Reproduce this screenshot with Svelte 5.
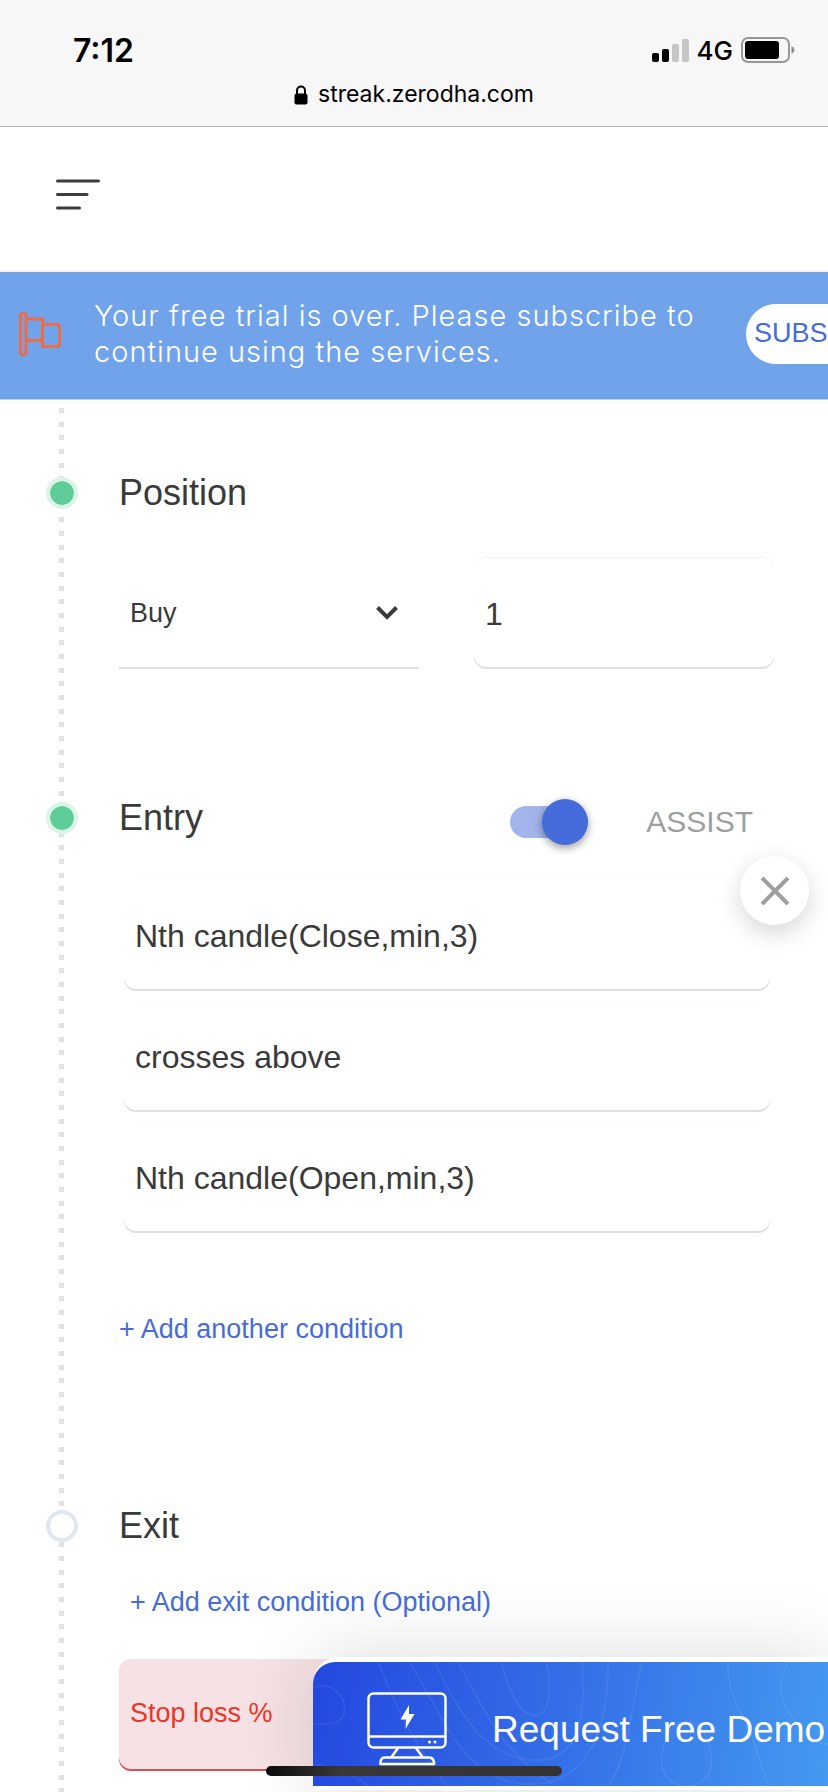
<script lang="ts">
	let side = $state('Buy');
	let quantity = $state('1');
	let assist = $state(true);
	let stopLoss = $state('');

	const bars = [
		{ x: 0, height: 9, on: true },
		{ x: 10, height: 13, on: true },
		{ x: 20, height: 18, on: false },
		{ x: 30, height: 23, on: false }
	];

	let conditions = $state([
		{ label: 'First indicator', value: 'Nth candle(Close,min,3)' },
		{ label: 'Comparator', value: 'crosses above' },
		{ label: 'Second indicator', value: 'Nth candle(Open,min,3)' }
	]);
</script>

<div class="page">
	<div class="browser">
		<div class="status">
			<span class="time">7:12</span>
			<div class="status-icons">
				<svg width="37" height="23" viewBox="0 0 37 23" aria-hidden="true">
					{#each bars as bar}
						<rect x={bar.x} y={23 - bar.height} width="7" height={bar.height} rx="2" fill={bar.on ? '#000' : '#c6c6c6'} />
					{/each}
				</svg>
				<span class="network">4G</span>
				<svg width="54" height="26" viewBox="0 0 54 26" aria-hidden="true">
					<rect x="1" y="1" width="47" height="24" rx="6" fill="none" stroke="#979797" stroke-width="2" />
					<rect x="4" y="4" width="34" height="18" rx="3" />
					<path d="M50.500 9 Q53.500 10.500 53.500 13 Q53.500 15.500 50.500 17 Z" fill="#8c8c8c" />
				</svg>
			</div>
		</div>
		<div class="address">
			<svg width="14" height="20" viewBox="0 0 14 20" aria-hidden="true">
				<path d="M3 10 V5.500 a4 4 0 0 1 8 0 V10" fill="none" stroke="#000" stroke-width="2" />
				<rect x="0.500" y="8.500" width="13" height="11" rx="2" />
			</svg>
			<span>streak.zerodha.com</span>
		</div>
	</div>

	<header class="header">
		<button class="menu" aria-label="Menu">
			<svg width="44" height="32" viewBox="0 0 44 32" fill="none" stroke="#3c3c3e" stroke-width="3" stroke-linecap="round">
				<path d="M1.500 2 H42.500 M1.500 15.500 H31 M1.500 29 H23.500" />
			</svg>
		</button>
	</header>

	<div class="banner">
		<svg width="44" height="44" viewBox="0 0 44 44" fill="none" stroke="#ea6c4b" stroke-width="3" stroke-linejoin="round" aria-hidden="true">
			<rect x="1.500" y="1.500" width="5.500" height="41" rx="2" />
			<path d="M7 7 H23.500 V28.500 H7" />
			<path d="M23.500 12.500 H38 Q40.500 12.500 40.500 15 V32 Q40.500 34.500 38 34.500 H23.500 V28" />
		</svg>
		<p>Your free trial is over. Please subscribe to continue using the services.</p>
		<button class="subscribe">SUBSCRIBE</button>
	</div>

	<main class="steps">
		<section class="step done">
			<div class="step-head">
				<h2>Position</h2>
			</div>
			<div class="fields">
				<div class="select">
					<select aria-label="Position type" bind:value={side}>
						<option>Buy</option>
						<option>Sell</option>
					</select>
					<svg width="24" height="16" viewBox="0 0 24 16" fill="none" stroke="#3a3a3a" stroke-width="4" aria-hidden="true">
						<path d="M2.500 2.500 L12 12 L21.500 2.500" />
					</svg>
				</div>
				<input class="field" aria-label="Quantity" bind:value={quantity} />
			</div>
		</section>

		<section class="step done">
			<div class="step-head">
				<h2>Entry</h2>
				<label class="assist">
					<input type="checkbox" role="switch" bind:checked={assist} />
					<span>ASSIST</span>
				</label>
			</div>
			<div class="conditions">
				{#each conditions as condition}
					<input class="field" aria-label={condition.label} bind:value={condition.value} />
				{/each}
				<button class="remove" aria-label="Remove condition">
					<svg width="30" height="30" viewBox="0 0 30 30" stroke="#9d9fa2" stroke-width="4">
						<path d="M2 2 L28 28 M28 2 L2 28" />
					</svg>
				</button>
			</div>
			<button class="add">+ Add another condition</button>
		</section>

		<section class="step">
			<div class="step-head">
				<h2>Exit</h2>
			</div>
			<button class="add optional">+ Add exit condition (Optional)</button>
			<div class="fields">
				<input class="field stop-loss" aria-label="Stop loss %" placeholder="Stop loss %" bind:value={stopLoss} />
			</div>
		</section>
	</main>

	<div class="demo">
		<button>
			<svg class="contours" viewBox="38 66 1530 374" preserveAspectRatio="xMinYMin slice" fill="none" stroke="#fff" stroke-opacity="0.06" stroke-width="6" aria-hidden="true">
				<path d="M38 142 C90 125 132 160 132 206 C132 250 90 254 38 250" />
				<path d="M38 370 C110 378 160 400 210 440" />
				<path d="M232 66 C280 190 330 300 440 440" />
				<path d="M325 66 C420 220 480 400 640 425 C800 450 915 350 915 66" />
				<path d="M400 66 C480 240 560 358 710 358 C830 350 850 230 838 66" />
				<path d="M470 66 C550 220 600 330 750 430" />
				<path d="M597 66 C620 150 650 225 695 225 C750 225 745 130 732 66" />
				<path d="M1016 66 C980 210 980 330 915 440" />
				<path d="M1270 66 C1270 190 1330 230 1350 310 C1370 380 1380 400 1393 440" />
				<path d="M1450 66 C1410 130 1430 190 1460 230 C1500 270 1500 305 1568 310" />
				<path d="M1148 242 C1110 242 1075 290 1075 360 C1075 460 1220 460 1222 360 C1222 280 1180 242 1148 242" />
			</svg>
			<svg class="monitor" width="80" height="76" viewBox="0 0 80 76" fill="none" stroke="#fff" stroke-width="2.500" stroke-linejoin="round" aria-hidden="true">
				<rect x="1.500" y="1.500" width="77" height="54" rx="5" />
				<path d="M2 44.500 H78" />
				<path d="M31 56 L24.500 65 M49 56 L55.500 65" />
				<path d="M13.500 72 V70 Q14 65.500 18 65.500 H62 Q66 65.500 67 70 V72 Z" />
				<path d="M42 13 L33.500 27.500 H39 L38.500 37 L47.500 22 H42 Z" fill="#fff" stroke="none" />
				<circle cx="62.500" cy="50" r="1.500" fill="#fff" stroke="none" />
				<circle cx="68" cy="50" r="1.500" fill="#fff" stroke="none" />
			</svg>
			<span>Request Free Demo</span>
		</button>
	</div>
	<div class="home-indicator"></div>
</div>

<style>
	:global(body) {
		margin: 0;
		background: #fff;
		color: #3a3a3a;
		font-family: "Liberation Sans", Arial, sans-serif;
	}

	button,
	input,
	select {
		box-sizing: border-box;
		margin: 0;
		padding: 0;
		border: none;
		background: none;
		color: inherit;
		font-family: inherit;
	}

	svg {
		display: block;
		flex: none;
	}

	.page {
		min-height: 100vh;
		display: flex;
		flex-direction: column;
		overflow: hidden;
	}

	.browser {
		padding: 30px 33px 16px 73px;
		background: #f7f7f7;
		border-bottom: 1px solid #b0b0b0;
		color: #000;
		font-family: Inter, sans-serif;
	}

	.status {
		height: 40px;
		display: flex;
		align-items: center;
		justify-content: space-between;
	}

	.time {
		font-size: 32px;
		font-weight: 600;
	}

	.status-icons {
		display: flex;
		align-items: center;
		gap: 8px;
	}

	.network {
		font-size: 26px;
		font-weight: 500;
	}

	.address {
		display: flex;
		align-items: center;
		justify-content: center;
		gap: 10px;
		margin: 9px 0 0 -40px;
		font-size: 23px;
		line-height: 31px;
	}

	.header {
		padding: 52px 56px 59px;
		border-bottom: 2px solid #f4f4f4;
	}

	.menu {
		display: block;
	}

	.banner {
		box-sizing: border-box;
		display: flex;
		align-items: center;
		height: 128px;
		padding: 0 0 4px 19px;
		background: #71a3ea;
		border-bottom: 1px solid #b4d0f5;
		overflow: hidden;
	}

	.banner p {
		flex: none;
		width: 624px;
		margin: 0 28px 0 31px;
		color: #fff;
		font-family: Inter, sans-serif;
		font-size: 29px;
		font-weight: 300;
		letter-spacing: 1px;
		line-height: 36px;
	}

	.subscribe {
		flex: none;
		height: 60px;
		padding: 0 8px;
		border-radius: 30px;
		background: #fff;
		color: #466cdc;
		font-size: 27px;
	}

	.steps {
		flex: 1;
		padding: 73px 54px 20px 119px;
		/* three 5px dots per 41px tile */
		background: linear-gradient(#e2e2e2 5px, #fff 5px 14px, #e2e2e2 14px 19px, #fff 19px 27px, #e2e2e2 27px 32px, #fff 32px) 59px 8px / 5px 41px repeat-y;
	}

	.step + .step {
		margin-top: 129px;
	}

	.step + .step:last-child {
		margin-top: 161px;
	}

	.step-head {
		position: relative;
		display: flex;
		justify-content: space-between;
	}

	.step-head::before {
		content: "";
		position: absolute;
		top: 4px;
		left: -73px;
		box-sizing: border-box;
		width: 32px;
		height: 32px;
		border: 4px solid #e0e7f1;
		border-radius: 50%;
		background: #fff;
	}

	.done .step-head::before {
		border-color: #daf5e8;
		background: #5fcd98;
		background-clip: padding-box;
	}

	h2 {
		margin: 0;
		font-size: 36px;
		font-weight: 400;
		line-height: 40px;
	}

	.fields {
		display: grid;
		grid-template-columns: 1fr 1fr;
		gap: 55px;
		margin-top: 44px;
	}

	.field {
		width: 100%;
		height: 112px;
		padding: 2px 11px 0;
		border-radius: 12px;
		box-shadow: inset 0 -2px 0 #e0e0e0, inset 0 1px 0 #f4f4f4;
		font-size: 32px;
	}

	.select {
		position: relative;
	}

	.select select {
		appearance: none;
		width: 100%;
		height: 112px;
		padding: 2px 11px 0;
		border-bottom: 2px solid #e0e0e0;
		font-size: 27px;
	}

	.select svg {
		position: absolute;
		top: 48px;
		right: 20px;
		pointer-events: none;
	}

	.assist {
		display: flex;
		align-items: center;
		gap: 58px;
		height: 48px;
		margin-right: 21px;
		color: #9d9fa2;
		font-size: 30px;
	}

	.assist input {
		appearance: none;
		position: relative;
		width: 78px;
		height: 32px;
		border-radius: 16px;
		background: #e2e2e2;
	}

	.assist input:checked {
		background: #a3b4eb;
	}

	.assist input::before {
		content: "";
		position: absolute;
		top: -7px;
		left: 0;
		width: 46px;
		height: 46px;
		border-radius: 50%;
		background: #fff;
		box-shadow: 0 3px 8px rgba(0, 0, 0, 0.4);
	}

	.assist input:checked::before {
		left: 32px;
		background: #466cdc;
	}

	.conditions {
		position: relative;
		display: flex;
		flex-direction: column;
		gap: 9px;
		margin-top: 33px;
		padding: 0 4px 0 5px;
	}

	.conditions .field {
		box-shadow: inset 0 -2px 0 #e0e0e0, inset 0 1px 0 #fdfdfd;
	}

	.remove {
		position: absolute;
		top: -23px;
		right: -35px;
		display: flex;
		align-items: center;
		justify-content: center;
		width: 69px;
		height: 69px;
		border-radius: 50%;
		background: #fff;
		box-shadow: 0 8px 24px rgba(0, 0, 0, 0.16);
	}

	.add {
		display: block;
		margin-top: 80px;
		color: #466cdc;
		font-size: 27px;
		line-height: 32px;
	}

	.optional {
		margin-top: 40px;
		padding-left: 11px;
	}

	.optional + .fields {
		margin-top: 41px;
	}

	.stop-loss {
		padding-bottom: 6px;
		background: #f6e2e4;
		box-shadow: inset 0 -2px 0 #d94f5c;
		font-size: 27px;
	}

	.stop-loss::placeholder {
		color: #ee3524;
		opacity: 1;
	}

	/* floating call to action, docked to the lower right corner */
	.demo {
		position: fixed;
		right: 0;
		bottom: 2px;
		width: calc(100% - 313px);
		box-sizing: border-box;
		padding: 5px 0 4px;
		border-radius: 26px 0 0 0;
		background: #fff;
		box-shadow: 0 0 80px rgba(0, 0, 0, 0.14);
	}

	.demo button {
		position: relative;
		display: flex;
		align-items: center;
		gap: 45px;
		width: 100%;
		height: 124px;
		padding: 12px 0 0 54px;
		border-radius: 22px 0 0 0;
		background: linear-gradient(100deg, #2447df, #4599f0);
		color: #fff;
		font-size: 37px;
		white-space: nowrap;
		overflow: hidden;
	}

	.demo .contours {
		position: absolute;
		inset: 0;
		width: 100%;
		height: 100%;
	}

	.demo .monitor,
	.demo span {
		position: relative;
	}

	.home-indicator {
		position: fixed;
		bottom: 16px;
		left: calc(50% - 148px);
		width: 296px;
		height: 10px;
		border-radius: 5px;
		background: linear-gradient(90deg, #0a0a0a, #383838 25%, #333);
	}
</style>
